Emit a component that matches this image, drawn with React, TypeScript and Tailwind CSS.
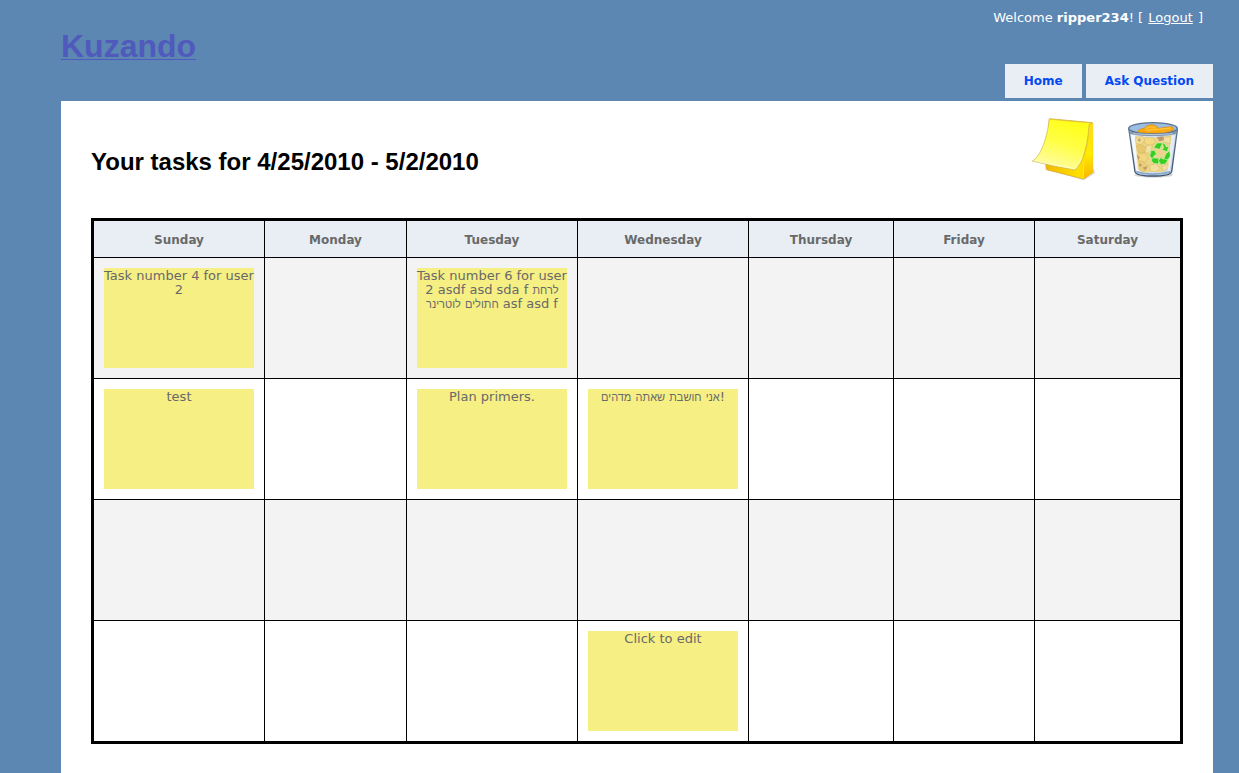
import React from "react";

type Week = (string | null)[];

const days = [
  { name: "Sunday", width: "w-[172px]" },
  { name: "Monday", width: "w-[142px]" },
  { name: "Tuesday", width: "w-[171px]" },
  { name: "Wednesday", width: "w-[171px]" },
  { name: "Thursday", width: "w-[145px]" },
  { name: "Friday", width: "w-[141px]" },
  { name: "Saturday", width: "w-[147px]" },
];

const weeks: Week[] = [
  [
    "Task number 4 for user 2",
    null,
    "Task number 6 for user 2 asdf asd sda f לרחת חתולים לוטרינר asf asd f",
    null,
    null,
    null,
    null,
  ],
  ["test", null, "Plan primers.", "אני חושבת שאתה מדהים!", null, null, null],
  [null, null, null, null, null, null, null],
  [null, null, null, "Click to edit", null, null, null],
];

// Hebrew words use a smaller, narrower face than the Latin text around them.
function NoteText({ text }: { text: string }) {
  const parts = text.split(/([\u0590-\u05ff]+)/);
  return (
    <>
      {parts.map((part, i) =>
        i % 2 === 1 ? (
          <span key={i} className="font-['Liberation_Sans',sans-serif] text-[11px]">
            {part}
          </span>
        ) : (
          part
        ),
      )}
    </>
  );
}

function Note({ text }: { text: string }) {
  return (
    <button
      type="button"
      dir="ltr"
      className="flex h-[100px] w-[150px] cursor-pointer items-start justify-center bg-[#f6ef84] pt-px text-center text-[13px] leading-[14px]"
    >
      <span>
        <NoteText text={text} />
      </span>
    </button>
  );
}

function StickyPadIcon() {
  return (
    <svg viewBox="33 36 192 192" className="size-16" aria-hidden="true">
      <defs>
        <linearGradient id="sheet" x1="0.7" y1="0" x2="0.3" y2="1">
          <stop offset="0" stopColor="#ffff12" />
          <stop offset="0.5" stopColor="#ffff48" />
          <stop offset="1" stopColor="#fffcae" />
        </linearGradient>
        <linearGradient id="side" x1="0" y1="0" x2="0" y2="1">
          <stop offset="0" stopColor="#ffd91c" />
          <stop offset="0.55" stopColor="#ffec00" />
          <stop offset="1" stopColor="#f7b500" />
        </linearGradient>
        <linearGradient id="base" x1="0" y1="0" x2="1" y2="0">
          <stop offset="0" stopColor="#f0b800" />
          <stop offset="0.7" stopColor="#ffe000" />
          <stop offset="1" stopColor="#ffc400" />
        </linearGradient>
      </defs>
      <path d="M82 194 L192 226 L226 204 L220 190Z" fill="#9a9a9a" opacity="0.35" />
      <path d="M77 176 L79 194 L190 222 L218 202 L218 54 L88 42Z" fill="url(#base)" stroke="#d3a53a" strokeWidth="2" strokeLinejoin="round" />
      <path d="M207 58 L219 54 L218 204 L191 222 L190 166 Q206 130 207 58Z" fill="url(#side)" />
      <path d="M191 170 L190 220" stroke="#fff15a" strokeWidth="2" />
      <path d="M88 41 L217 53 L207 59 C205 104 193 171 165 195 Q98 184 37 168 C65 151 82 94 88 41Z" fill="url(#sheet)" stroke="#c4b34c" strokeWidth="2" strokeLinejoin="round" />
      <path d="M91 43 L213 54" stroke="#e6b83a" strokeWidth="2" />
      <path d="M45 167 Q105 182 164 191 Q179 176 186 156" fill="none" stroke="#fffbd5" strokeWidth="3" opacity="0.8" />
    </svg>
  );
}

function RecycleBinIcon() {
  return (
    <svg viewBox="27 36 192 192" className="size-16" aria-hidden="true">
      <defs>
        <linearGradient id="glass" x1="0" y1="0" x2="1" y2="0">
          <stop offset="0" stopColor="#e9f2fb" />
          <stop offset="0.5" stopColor="#d4e2f2" />
          <stop offset="1" stopColor="#c4d6ec" />
        </linearGradient>
        <linearGradient id="frame" x1="0" y1="0" x2="0" y2="1">
          <stop offset="0" stopColor="#5d7590" />
          <stop offset="1" stopColor="#3f536b" />
        </linearGradient>
      </defs>
      <ellipse cx="131" cy="209" rx="58" ry="9" fill="#777" opacity="0.3" />
      <path d="M57 75 L75 200 Q80 213 129 213 Q180 213 185 200 L202 75Z" fill="url(#glass)" stroke="url(#frame)" strokeWidth="4" />
      <path d="M75 93 Q128 106 184 91 L176 187 L157 202 L124 200 L101 203 L81 192Z" fill="#ead58a" />
      <g stroke="#d6b65c" strokeWidth="1.5" strokeLinejoin="round">
        <path d="M78 97 L98 94 L105 108 L91 119 L76 114Z" fill="#f0dc94" />
        <path d="M105 97 L130 98 L137 113 L120 122 L102 114Z" fill="#f3d981" />
        <path d="M77 122 L93 118 L110 128 L104 143 L86 143Z" fill="#e6c872" />
        <path d="M110 121 L127 121 L122 145 L105 143Z" fill="#f2e1a4" />
        <path d="M84 147 L104 145 L116 157 L105 172 L82 165Z" fill="#f1d57f" />
        <path d="M81 171 L98 169 L115 182 L103 200 L84 192Z" fill="#e9cf78" />
        <path d="M119 181 L137 176 L151 190 L137 201 L121 198Z" fill="#f2df9b" />
        <path d="M155 185 L175 176 L174 190 L160 200Z" fill="#f3dda0" />
        <path d="M151 98 L181 95 L181 116 L165 112Z" fill="#f2e1a5" />
      </g>
      <g fill="#b98a68" opacity="0.8">
        <path d="M140 96 L160 94 L162 105 L148 109Z" />
        <path d="M82 105 L91 99 L91 111Z" />
        <path d="M79 148 L90 157 L85 166Z" />
        <path d="M97 188 L112 184 L107 195Z" />
        <path d="M88 174 L97 181 L87 186Z" />
      </g>
      <path d="M64 90 L79 194 L87 203 L74 91Z" fill="#fff" opacity="0.65" />
      <path d="M196 91 L179 200 L172 202 L184 91Z" fill="#fff" opacity="0.5" />
      <path d="M78 197 Q128 212 182 197 L180 204 Q128 216 80 204Z" fill="#89a8cf" />
      <ellipse cx="129" cy="70" rx="73" ry="17" fill="#9ebde2" stroke="#5a7289" strokeWidth="4" />
      <path d="M82 80 Q86 70 102 71 Q108 59 126 59 Q141 60 144 70 L181 65 Q193 66 189 75 Q174 83 145 84 Q110 87 82 80Z" fill="#ffad12" stroke="#d98600" strokeWidth="2" />
      <path d="M107 71 Q119 61 136 67 M110 77 Q135 72 143 73 L181 69" fill="none" stroke="#ffca48" strokeWidth="3" />
      <path d="M56 72 Q60 83 94 85 Q129 87 164 85 Q199 82 202 72 L200 83 Q194 91 129 92 Q65 92 58 83Z" fill="#8198b0" stroke="#526a82" strokeWidth="1" />
      <path d="M70 86 Q129 92 188 86" fill="none" stroke="#d7e4f0" strokeWidth="2" />
      <g fill="#36cf20" stroke="#d9f7cf" strokeWidth="1.5" strokeLinejoin="round">
        <path d="M131 128 L141 114 L158 114 L149 133Z" />
        <path d="M157 113 L165 117 L169 126 L176 123 L172 140 L155 134 L161 130Z" />
        <path d="M168 146 L179 137 L181 153 L173 166 L160 164Z" />
        <path d="M145 167 L155 155 L156 161 L174 164 L166 177 L156 178 L156 183Z" />
        <path d="M127 158 L146 160 L146 177 L130 175 L124 166Z" />
        <path d="M118 140 L133 135 L141 151 L135 149 L126 162 L119 151 L123 143Z" />
      </g>
    </svg>
  );
}

export default function App() {
  return (
    <div className="flex min-h-screen flex-col bg-[#5c87b2] pr-[26px] pl-[61px] font-['DejaVu_Sans',Verdana,sans-serif] text-[13px] text-[#696969]">
      <header className="flex items-start justify-between pb-[3px]">
        <h1 className="pt-[26px] font-['Liberation_Sans',Arial,sans-serif] text-[32px] leading-10 font-bold">
          <a href="#home" className="text-[#505abc] underline decoration-1 underline-offset-2">
            Kuzando
          </a>
        </h1>
        <div className="flex flex-col items-end">
          <p className="h-16 pt-2 pr-[10px] leading-5 text-white">
            Welcome <b>ripper234</b>! [{" "}
            <a href="#logout" className="mx-px underline">
              Logout
            </a>{" "}
            ]
          </p>
          <nav className="flex gap-1 text-[12px] leading-[33px] font-bold text-[#034af3]">
            <a href="#home" className="bg-[#e8eef4] px-[19px] pt-px">
              Home
            </a>
            <a href="#ask" className="bg-[#e8eef4] px-[19px] pt-px">
              Ask Question
            </a>
          </nav>
        </div>
      </header>

      <main className="grow bg-white px-[30px] pt-4 pb-[30px]">
        <div className="mb-[37px] flex items-end justify-between">
          <h2 className="pb-[3px] font-['Liberation_Sans',Arial,sans-serif] text-[24px] leading-8 font-bold text-black">
            Your tasks for 4/25/2010 - 5/2/2010
          </h2>
          <div className="flex gap-6">
            <button type="button" aria-label="New task">
              <StickyPadIcon />
            </button>
            <button type="button" aria-label="Delete task">
              <RecycleBinIcon />
            </button>
          </div>
        </div>

        <table className="w-full table-fixed border-collapse border-3 border-black">
          <thead>
            <tr>
              {days.map((day) => (
                <th
                  key={day.name}
                  scope="col"
                  className={`${day.width} h-[38px] border border-black bg-[#e8eef4] p-0 pt-px text-center text-[12px] leading-4 font-bold`}
                >
                  {day.name}
                </th>
              ))}
            </tr>
          </thead>
          <tbody>
            {weeks.map((week, w) => (
              <tr key={w} className="odd:bg-[#f3f3f3]">
                {week.map((text, d) => (
                  <td key={d} className="h-[121px] border border-black p-[10px] align-top">
                    {text && <Note text={text} />}
                  </td>
                ))}
              </tr>
            ))}
          </tbody>
        </table>
      </main>
    </div>
  );
}
